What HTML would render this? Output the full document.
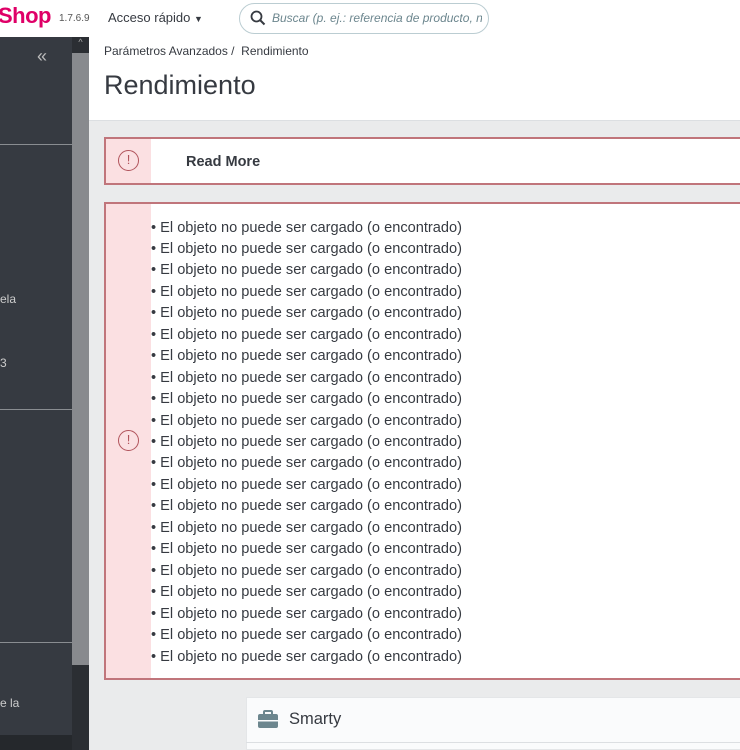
<!DOCTYPE html>
<html><head><meta charset="utf-8"><style>
*{margin:0;padding:0;box-sizing:border-box}
html,body{width:740px;height:750px;overflow:hidden}
body{background:#eaebec;font-family:"Liberation Sans",sans-serif;position:relative}
.abs{position:absolute}
</style></head><body>
<div class="abs" style="left:0;top:0;width:740px;height:37px;background:#fff"></div>
<div class="abs" style="left:-2px;top:3px;font-size:22px;color:#df0067;font-weight:bold;letter-spacing:-0.5px">Shop</div>
<div class="abs" style="left:59px;top:13px;font-size:10px;color:#555">1.7.6.9</div>
<div class="abs" style="left:108px;top:10px;font-size:13px;color:#363a41">Acceso rápido <span style="font-size:9px">▼</span></div>
<div class="abs" style="left:239px;top:3px;width:250px;height:31px;border:1px solid #bbcdd2;border-radius:16px;background:#fff"></div>
<svg class="abs" style="left:250px;top:10px" width="16" height="16" viewBox="0 0 16 16"><circle cx="6.5" cy="6.5" r="5" fill="none" stroke="#363a41" stroke-width="1.8"/><path d="M10 10l4.5 4.5" stroke="#363a41" stroke-width="2"/></svg>
<div class="abs" style="left:272px;top:11px;font-size:12px;font-style:italic;color:#6c868e;white-space:nowrap;width:210px;overflow:hidden">Buscar (p. ej.: referencia de producto, n</div>

<div class="abs" style="left:0;top:37px;width:72px;height:713px;background:#363a41"></div>
<div class="abs" style="left:0;top:735px;width:72px;height:15px;background:#25282c"></div>
<div class="abs" style="left:37px;top:46px;font-size:18px;color:#bbb">«</div>
<div class="abs" style="left:0;top:144px;width:72px;height:1px;background:#8a8d91"></div>
<div class="abs" style="left:0;top:409px;width:72px;height:1px;background:#8a8d91"></div>
<div class="abs" style="left:0;top:642px;width:72px;height:1px;background:#8a8d91"></div>
<div class="abs" style="left:0;top:292px;font-size:12px;color:#ccc">ela</div>
<div class="abs" style="left:0;top:356px;font-size:12px;color:#ccc">3</div>
<div class="abs" style="left:0;top:696px;font-size:12px;color:#ccc">e la</div>
<div class="abs" style="left:72px;top:37px;width:17px;height:713px;background:#888a8e"></div>
<div class="abs" style="left:72px;top:37px;width:17px;height:16px;background:#2b2e33;color:#aaa;font-size:9px;text-align:center">^</div>
<div class="abs" style="left:72px;top:665px;width:17px;height:85px;background:#2b2e33"></div>

<div class="abs" style="left:89px;top:37px;width:651px;height:84px;background:#fff;border-bottom:1px solid #dcdfe2"></div>
<div class="abs" style="left:104px;top:44px;font-size:12px;color:#363a41">Parámetros Avanzados /&nbsp; Rendimiento</div>
<div class="abs" style="left:104px;top:70px;font-size:27px;color:#363a41">Rendimiento</div>

<div class="abs" style="left:104px;top:137px;width:650px;height:48px;border:2px solid #c0757b;background:#fff"></div>
<div class="abs" style="left:106px;top:139px;width:45px;height:44px;background:#fbe0e2"></div>
<div class="abs" style="left:118px;top:150px;width:21px;height:21px;border:1.5px solid #b1545c;border-radius:50%;color:#b1545c;font-size:13px;text-align:center;line-height:18px">!</div>
<div class="abs" style="left:186px;top:154px;font-size:14.5px;font-weight:bold;color:#363a41">Read More</div>

<div class="abs" style="left:104px;top:202px;width:650px;height:478px;border:2px solid #c0757b;background:#fff"></div>
<div class="abs" style="left:106px;top:204px;width:45px;height:474px;background:#fbe0e2"></div>
<div class="abs" style="left:118px;top:430px;width:21px;height:21px;border:1.5px solid #b1545c;border-radius:50%;color:#b1545c;font-size:13px;text-align:center;line-height:18px">!</div>
<div class="abs" style="left:151px;top:217.5px;font-size:14.6px;color:#363a41;line-height:21.45px;white-space:nowrap">
<div>• El objeto no puede ser cargado (o encontrado)</div><div>• El objeto no puede ser cargado (o encontrado)</div><div>• El objeto no puede ser cargado (o encontrado)</div><div>• El objeto no puede ser cargado (o encontrado)</div><div>• El objeto no puede ser cargado (o encontrado)</div><div>• El objeto no puede ser cargado (o encontrado)</div><div>• El objeto no puede ser cargado (o encontrado)</div><div>• El objeto no puede ser cargado (o encontrado)</div><div>• El objeto no puede ser cargado (o encontrado)</div><div>• El objeto no puede ser cargado (o encontrado)</div><div>• El objeto no puede ser cargado (o encontrado)</div><div>• El objeto no puede ser cargado (o encontrado)</div><div>• El objeto no puede ser cargado (o encontrado)</div><div>• El objeto no puede ser cargado (o encontrado)</div><div>• El objeto no puede ser cargado (o encontrado)</div><div>• El objeto no puede ser cargado (o encontrado)</div><div>• El objeto no puede ser cargado (o encontrado)</div><div>• El objeto no puede ser cargado (o encontrado)</div><div>• El objeto no puede ser cargado (o encontrado)</div><div>• El objeto no puede ser cargado (o encontrado)</div><div>• El objeto no puede ser cargado (o encontrado)</div>
</div>

<div class="abs" style="left:246px;top:697px;width:500px;height:53px;background:#fafbfc;border:1px solid #e4e6e8"></div>
<div class="abs" style="left:246px;top:742px;width:500px;height:1px;background:#dcdfe2"></div>
<svg class="abs" style="left:258px;top:710px" width="20" height="18" viewBox="0 0 20 18"><rect x="6" y="1" width="8" height="4" rx="1" fill="none" stroke="#6c868e" stroke-width="2"/><rect x="0" y="4" width="20" height="14" rx="2" fill="#6c868e"/><rect x="0" y="10" width="20" height="1.5" fill="#fafbfc"/></svg>
<div class="abs" style="left:289px;top:710px;font-size:16.5px;color:#363a41">Smarty</div>
</body></html>
